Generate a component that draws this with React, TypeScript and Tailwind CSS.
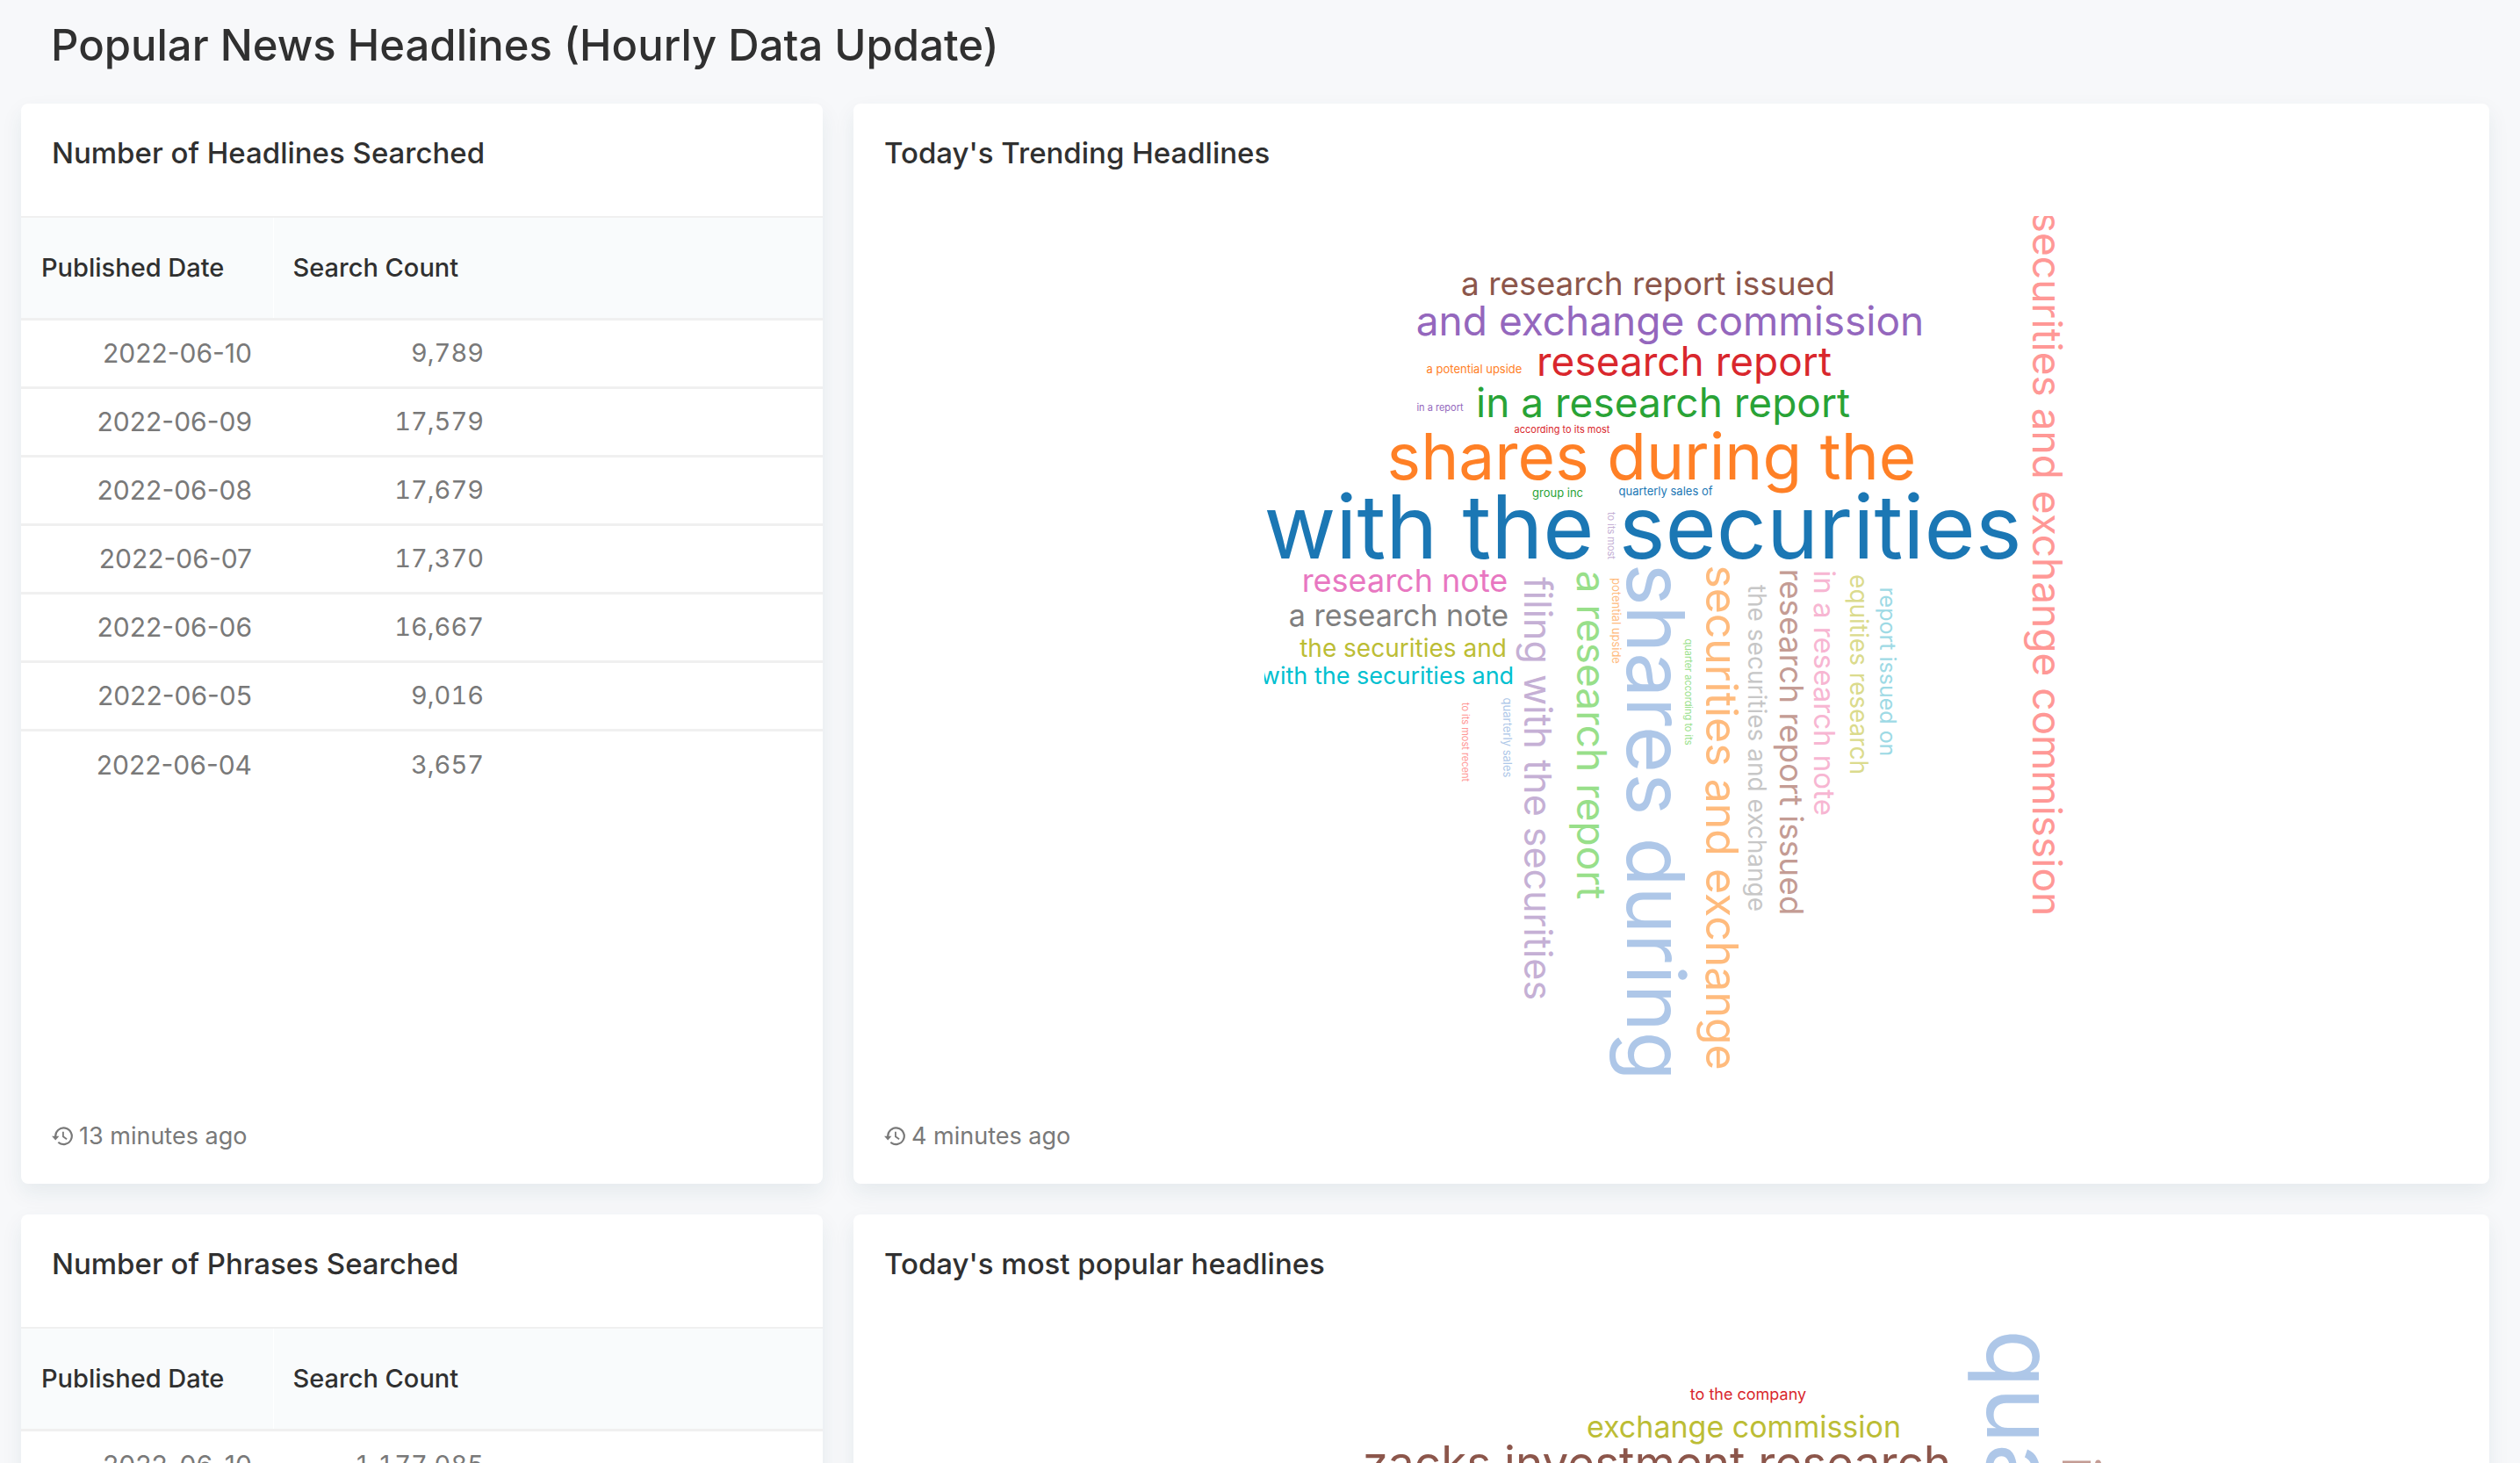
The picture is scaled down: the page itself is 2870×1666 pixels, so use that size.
import type { ReactNode } from "react";

type Word = {
  text: string;
  size: number;
  x: number;
  y: number;
  color: string;
  vertical?: boolean;
};

type Row = { date: string; count: string };

// x and y give the middle of each phrase's baseline inside its cloud.
const trendingWords: Word[] = [
  { text: "with the securities", size: 100, x: 431, y: 390, color: "#1b77b4" },
  { text: "shares during the", size: 73, x: 441, y: 300, color: "#ff8026" },
  { text: "in a research report", size: 46, x: 454, y: 229, color: "#29a336" },
  { text: "research report", size: 46, x: 478, y: 182, color: "#d9272d" },
  { text: "and exchange commission", size: 46, x: 462, y: 136, color: "#9467bd" },
  { text: "a research report issued", size: 37, x: 437, y: 90, color: "#8c564b" },
  { text: "research note", size: 36, x: 160, y: 428, color: "#e877c1" },
  { text: "a research note", size: 34, x: 153, y: 467, color: "#7f7f7f" },
  { text: "the securities and", size: 28, x: 158, y: 502, color: "#bcbd35" },
  { text: "with the securities and", size: 27, x: 140, y: 533, color: "#00c0d0" },
  { text: "quarterly sales of", size: 13, x: 457, y: 318, color: "#1b77b4" },
  { text: "a potential upside", size: 13, x: 239, y: 179, color: "#ff8026" },
  { text: "group inc", size: 13, x: 334, y: 320, color: "#29a336" },
  { text: "according to its most", size: 11, x: 339, y: 247, color: "#d9272d" },
  { text: "in a report", size: 11, x: 200, y: 222, color: "#9467bd" },
  { text: "shares during", size: 91, x: 413, y: 690, color: "#aec7e8", vertical: true },
  { text: "securities and exchange", size: 50, x: 503, y: 685, color: "#ffbb7d", vertical: true },
  { text: "a research report", size: 46, x: 356, y: 591, color: "#98df8a", vertical: true },
  { text: "securities and exchange commission", size: 46, x: 875, y: 396, color: "#ff9896", vertical: true },
  { text: "filing with the securities", size: 43, x: 296, y: 652, color: "#c5b0d5", vertical: true },
  { text: "research report issued", size: 37, x: 587, y: 599, color: "#c49c94", vertical: true },
  { text: "in a research note", size: 33, x: 626, y: 543, color: "#f7b6d2", vertical: true },
  { text: "the securities and exchange", size: 28, x: 551, y: 606, color: "#c7c7c7", vertical: true },
  { text: "equities research", size: 28, x: 667, y: 522, color: "#dbdb8d", vertical: true },
  { text: "report issued on", size: 25, x: 701, y: 519, color: "#9edae5", vertical: true },
  { text: "quarterly sales", size: 13, x: 272, y: 594, color: "#aec7e8", vertical: true },
  { text: "potential upside", size: 13, x: 396, y: 461, color: "#ffbb7d", vertical: true },
  { text: "quarter according to its", size: 11, x: 479, y: 542, color: "#98df8a", vertical: true },
  { text: "to its most recent", size: 11, x: 225, y: 599, color: "#ff9896", vertical: true },
  { text: "to its most", size: 11, x: 391, y: 364, color: "#c5b0d5", vertical: true },
];

const popularWords: Word[] = [
  { text: "to the company", size: 18, x: 687, y: 83, color: "#d9272d" },
  { text: "exchange commission", size: 34, x: 682, y: 126, color: "#bcbd35" },
  { text: "zacks investment research", size: 53, x: 583, y: 174, color: "#8c564b" },
  { text: "quarterly sales", size: 108, x: 959, y: 380, color: "#aec7e8", vertical: true },
  { text: "in a research", size: 58, x: 1045, y: 325, color: "#c49c94", vertical: true },
];

const headlineRows: Row[] = [
  { date: "2022-06-10", count: "9,789" },
  { date: "2022-06-09", count: "17,579" },
  { date: "2022-06-08", count: "17,679" },
  { date: "2022-06-07", count: "17,370" },
  { date: "2022-06-06", count: "16,667" },
  { date: "2022-06-05", count: "9,016" },
  { date: "2022-06-04", count: "3,657" },
];

const phraseRows: Row[] = [{ date: "2022-06-10", count: "1,177,085" }];

function HistoryIcon() {
  return (
    <svg width="25" height="22" viewBox="0 0 25 22" fill="none" aria-hidden="true" className="shrink-0">
      <path d="M4.2 11.4A9.3 9.3 0 1 1 7.3 17.7" stroke="currentColor" strokeWidth="2.2" />
      <path d="M0 10.8H8.4L4.2 15.6Z" fill="currentColor" />
      <path d="M12.9 5.8V11.2L17.1 14.3" stroke="currentColor" strokeWidth="1.8" />
    </svg>
  );
}

function Card({ title, updated, children }: { title: string; updated?: string; children: ReactNode }) {
  return (
    <section className="flex min-w-0 flex-col rounded-lg bg-white shadow-[0_10px_24px_rgba(20,80,95,0.08)]">
      <h2 className="px-[35px] pt-8 pb-12 text-[33px] leading-12 font-medium">{title}</h2>
      {children}
      {updated && (
        <p className="mt-auto flex items-center gap-1.5 px-[35px] pb-[34px] text-[27px] leading-10 text-[#797979]">
          <HistoryIcon />
          {updated}
        </p>
      )}
    </section>
  );
}

function CountTable({ rows, label }: { rows: Row[]; label: string }) {
  return (
    <table aria-label={label} className="w-full table-fixed border-collapse text-[29px] leading-10">
      <thead>
        <tr className="h-[116px] border-t-2 border-b-3 border-[#f0f0f0] bg-[#f9fbfc] text-left">
          <th scope="col" className="w-[287px] border-r border-white pl-[23px] font-medium whitespace-nowrap">
            Published Date
          </th>
          <th scope="col" className="w-[264px] pl-[22px] font-medium whitespace-nowrap">
            Search Count
          </th>
          <td />
        </tr>
      </thead>
      <tbody className="text-right text-[#797979]">
        {rows.map((row) => (
          <tr key={row.date} className="h-[78px] border-b-3 border-[#f0f0f0] last:border-b-0">
            <td className="pr-6 text-[30px]">{row.date}</td>
            <td className="pr-6 tabular-nums">{row.count}</td>
            <td />
          </tr>
        ))}
      </tbody>
    </table>
  );
}

function WordCloud({ words, width, label }: { words: Word[]; width: number; label: string }) {
  return (
    <svg
      role="img"
      aria-label={label}
      width={width}
      height="984"
      viewBox={`0 0 ${width} 984`}
      className="mx-auto max-w-full overflow-hidden"
    >
      {words.map((w) => (
        <text
          key={w.text}
          fontSize={w.size}
          fill={w.color}
          textAnchor="middle"
          transform={`translate(${w.x} ${w.y})${w.vertical ? " rotate(90)" : ""}`}
        >
          {w.text}
        </text>
      ))}
    </svg>
  );
}

export default function App() {
  return (
    <main className="h-screen overflow-hidden bg-[#f7f8fa] pr-[35px] pl-6 font-['Inter',sans-serif] text-[#303030]">
      <h1 className="px-[34px] pt-[21px] pb-[35px] text-[49px] leading-[62px] font-medium">
        Popular News Headlines (Hourly Data Update)
      </h1>
      <div className="grid auto-rows-[1230px] grid-cols-[913fr_1863fr] gap-[35px]">
        <Card title="Number of Headlines Searched" updated="13 minutes ago">
          <CountTable rows={headlineRows} label="Number of Headlines Searched" />
        </Card>
        <Card title="Today's Trending Headlines" updated="4 minutes ago">
          <WordCloud words={trendingWords} width={927} label="Today's trending headlines" />
        </Card>
        <Card title="Number of Phrases Searched">
          <CountTable rows={phraseRows} label="Number of Phrases Searched" />
        </Card>
        <Card title="Today's most popular headlines">
          <WordCloud words={popularWords} width={1200} label="Today's most popular headlines" />
        </Card>
      </div>
    </main>
  );
}
